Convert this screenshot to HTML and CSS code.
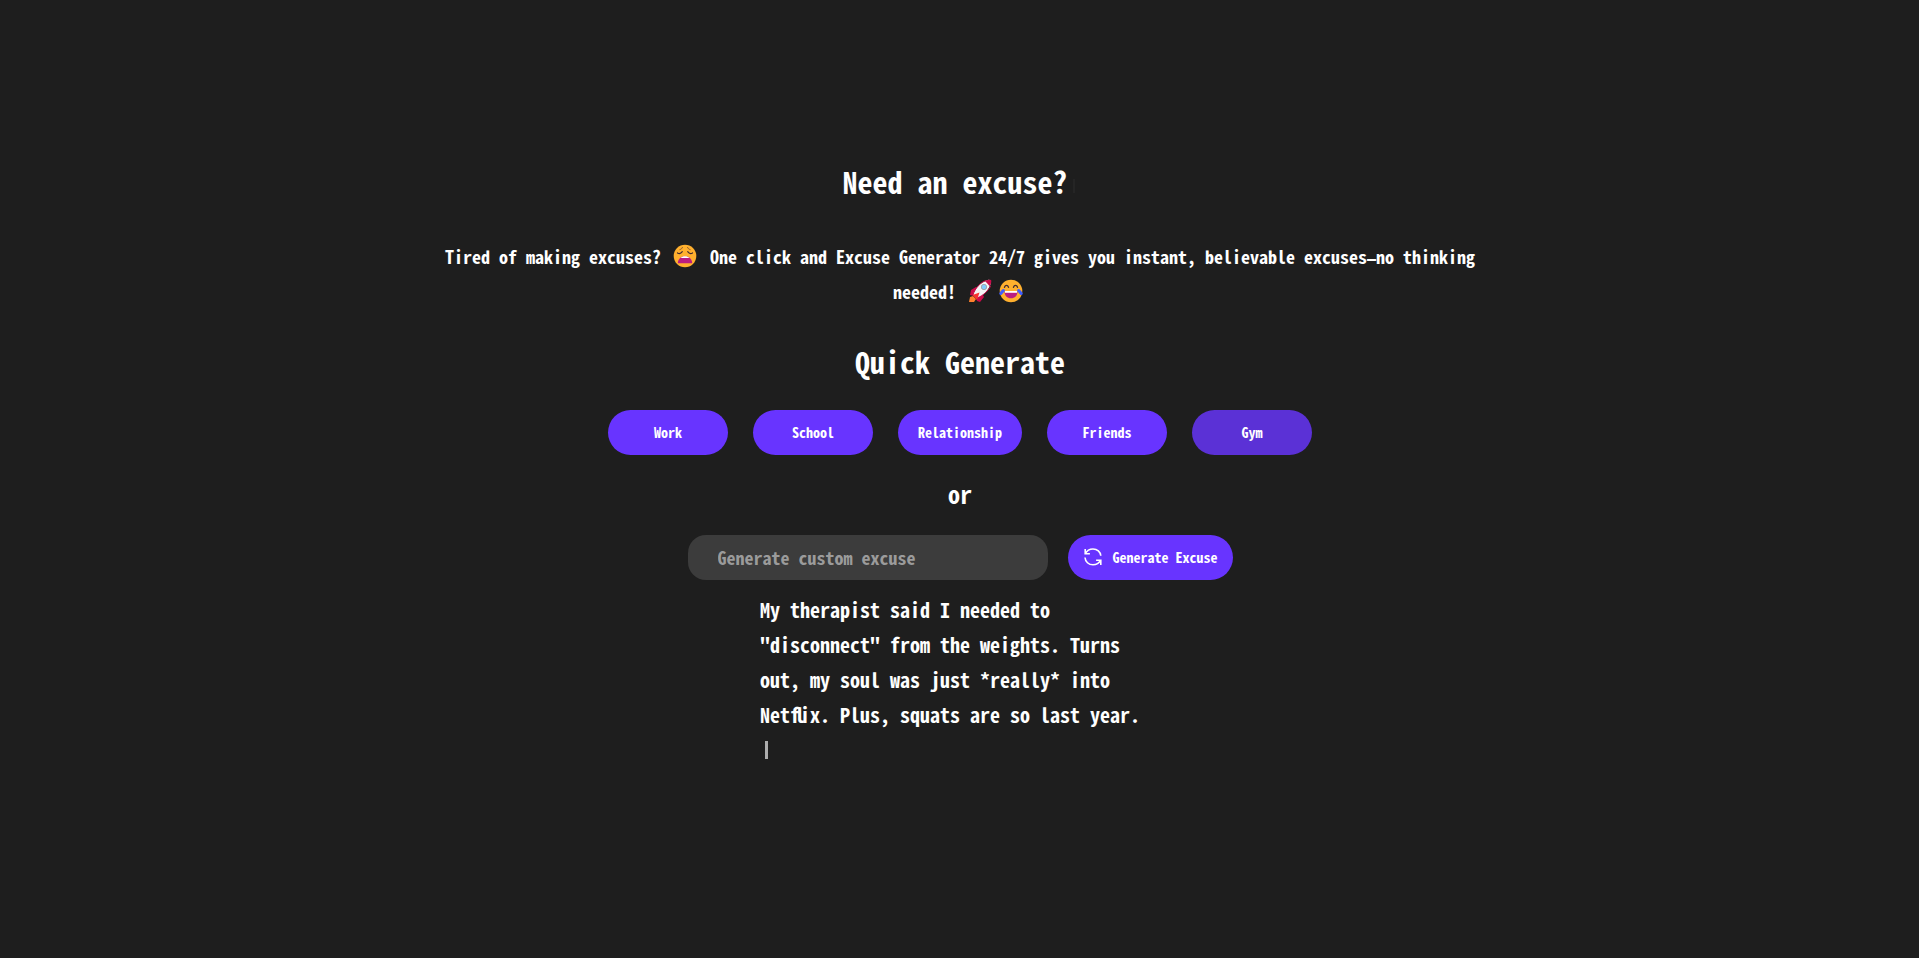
FILE: index.html
```html
<!DOCTYPE html>
<html lang="en">
<head>
<meta charset="utf-8">
<title>Excuse Generator 24/7</title>
<link rel="stylesheet" href="styles.css">
</head>
<body>
<main class="page">
  <h1 class="title">Need an excuse?<span class="title-cursor"></span></h1>
  <p class="intro">Tired of making excuses? <svg class="emoji" viewBox="0 0 24 24"><circle cx="12" cy="12" r="11.300" fill="#ffb02e"/><path d="M9.500 3C9.300 4.300 8.200 5.300 6.500 5.700M14.500 3c.2 1.300 1.300 2.300 3 2.700" fill="none" stroke="#8a5a30" stroke-width="1"/><path d="M4.500 8.900c1.500 1 3.500.6 4.800-1.200M19.500 8.900c-1.500 1-3.500.6-4.800-1.200" fill="none" stroke="#402a32" stroke-width="1.200" stroke-linecap="round"/><path d="M4.800 19.300c0-4.300 3.200-7.100 7.200-7.100s7.200 2.800 7.200 7.100z" fill="#bb1d80"/><path d="M7.500 14.100c2.400-2.500 6.600-2.500 9 0z" fill="#fff"/></svg> One click and Excuse Generator 24/7 gives you instant, believable excuses<span class="dash">—</span>no thinking needed! <svg class="emoji" viewBox="0 0 24 24"><path d="M1 23l1-5 3-1 3 3-2 3z" fill="#ff822d"/><path d="M2 16l1-5 5-3 3 3-5 6zM9 22l-1-3 6-5 2 4-4 5z" fill="#ca0b4a"/><path d="M5 16C7 9 13 3 20 1c2-.6 3.600 1 3 3-2 7-8 13-14 15z" fill="#f4f4f4"/><path d="M17 2c2-1 4-1.500 5.300-1.300.8.2 1 .6 1 1.300 0 1.700-.7 3.600-1.500 5.300z" fill="#ca0b4a"/><path d="M5 16C7 9 13 3 18 1.600M9 19c6-2 12-8 13.500-12" fill="none" stroke="#ca0b4a" stroke-width="1"/><path d="M4.500 16l7-2.500L9 21z" fill="#f8312f"/><circle cx="16" cy="8" r="2.700" fill="#83cbff" stroke="#9b9b9b" stroke-width=".8"/></svg><svg class="emoji" viewBox="0 0 24 24"><circle cx="12" cy="12" r="11.300" fill="#ffb02e"/><path d="M5.500 8.300c.8-2.600 3.200-2.600 4 0M14.500 8.300c.8-2.600 3.200-2.600 4 0" fill="none" stroke="#402a32" stroke-width="1.300" stroke-linecap="round"/><path d="M5.500 12.500h13c0 4-2.700 6.800-6.500 6.800s-6.500-2.800-6.500-6.800z" fill="#bb1d80"/><path d="M6 12h12v1.800H6z" fill="#fff"/><path d="M4.300 11.500L1.800 14.500M19.700 11.500l2.500 3" stroke="#3f5fff" stroke-width="3" stroke-linecap="round"/></svg></p>
  <h2 class="subtitle">Quick Generate</h2>
  <div class="categories">
    <button class="pill">Work</button>
    <button class="pill">School</button>
    <button class="pill">Relationship</button>
    <button class="pill">Friends</button>
    <button class="pill pill-active">Gym</button>
  </div>
  <p class="divider">or</p>
  <form class="custom">
    <input class="custom-input" type="text" placeholder="Generate custom excuse">
    <button class="pill generate" type="button"><svg class="icon" viewBox="0 0 18 18"><path d="M1.200 1v4.700h4.700M1.200 5.700C3 2.400 5.700 1 9 1c4.200 0 7.500 2.800 7.800 6.800M1 9.500c.3 4.200 3.600 7.300 8 7.300 3.300 0 6-1.500 7.800-4.600M12.100 12.200h4.700V17"/></svg>Generate Excuse</button>
  </form>
  <p class="answer">My therapist said I needed to "disconnect" from the weights. Turns out, my soul was just *really* into Net<span class="tight">fl</span>ix. Plus, squats are so last year. <span class="answer-cursor"></span></p>
</main>
</body>
</html>
```
FILE: styles.css
```css
* {
  box-sizing: border-box;
}

body,
.pill,
.custom-input {
  font-family: "Noto Sans Mono CJK JP", "Noto Sans CJK JP", monospace;
  font-feature-settings: "hwid";
  font-weight: 700;
}

body {
  margin: 0;
  background: #1e1e1e;
  color: #fff;
}

.page {
  display: flex;
  flex-direction: column;
  align-items: center;
  min-height: 958px;
  padding-top: 158px;
}

.title,
.subtitle {
  margin: 0;
  font-size: 30px;
  line-height: 46px;
}

.title {
  display: flex;
  align-items: center;
  margin-left: 1px;
}

.title-cursor {
  width: 2px;
  height: 14px;
  margin: 10px 3px 0 5px;
  background: #252525;
}

.intro {
  width: 1080px;
  margin: 35px 0 0 1px;
  font-size: 18px;
  line-height: 35px;
  text-align: center;
}

.dash {
  font-family: "DejaVu Sans Mono", monospace;
  font-size: 15px;
  line-height: 1;
}

.emoji {
  width: 24px;
  height: 24px;
  margin: 0 4px 0 3px;
  vertical-align: -4px;
}

.subtitle {
  margin-top: 29px;
  margin-left: 1px;
}

.categories {
  display: flex;
  gap: 25px;
  margin-top: 26px;
}

.pill {
  min-width: 120px;
  height: 45px;
  padding: 0 19px 2px 20px;
  border: 0;
  border-radius: 22.5px;
  background: #6834ff;
  color: #fff;
  font-size: 14px;
}

.categories .pill:nth-child(3) {
  width: 124px;
}

.pill-active {
  background: #5b31d6;
}

.divider {
  margin: 21px 0 0 1px;
  font-size: 24px;
  line-height: 36px;
}

.custom {
  display: flex;
  gap: 20px;
  margin-top: 23px;
  margin-left: 1px;
}

.custom-input {
  width: 360px;
  height: 45px;
  padding: 0 30px 2px;
  border: 0;
  border-radius: 18px;
  background: #3c3c3c;
  color: #fff;
  font-size: 18px;
}

.custom-input::placeholder {
  color: #9b9b9b;
}

.generate {
  display: flex;
  align-items: center;
  gap: 11px;
  width: 165px;
  padding: 0 15px 2px 16px;
  white-space: nowrap;
}

.icon {
  flex: none;
  width: 18px;
  height: 18px;
  fill: none;
  stroke: #fff;
  stroke-width: 1.6;
}

.answer {
  width: 400px;
  margin: 12px 0 0 1px;
  font-size: 20px;
  line-height: 35px;
}

.tight {
  letter-spacing: -0.25em;
}

.answer-cursor {
  display: block;
  width: 3px;
  height: 18px;
  margin: 9px 0 0 5px;
  background: #adadad;
}
```
